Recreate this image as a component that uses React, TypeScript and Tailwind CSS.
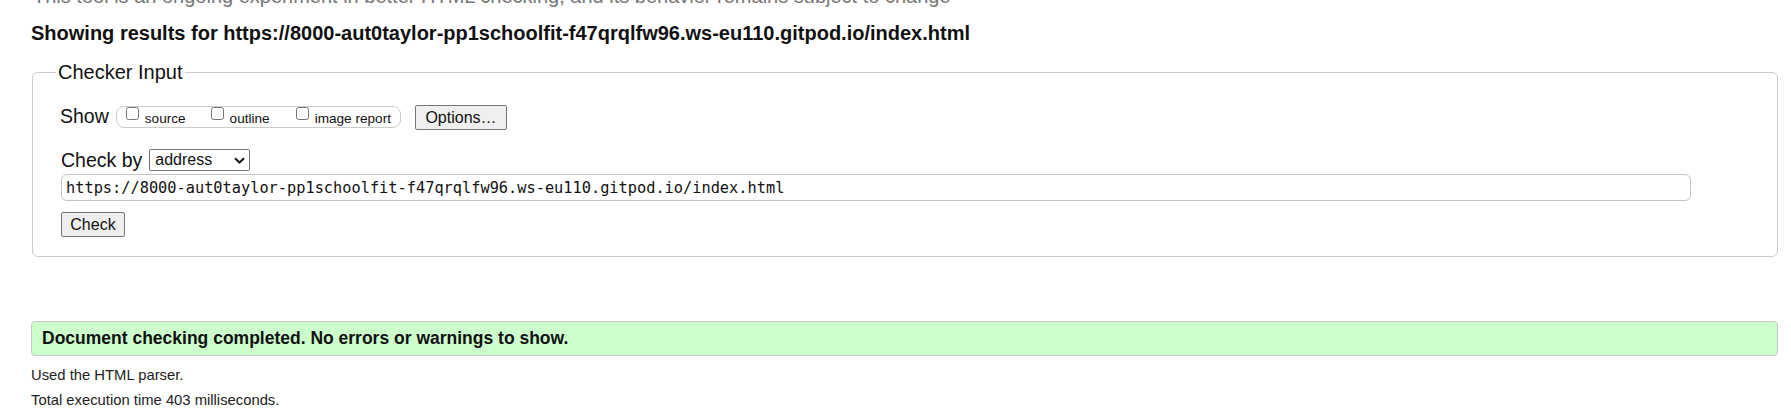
export default function App() {
  return (
    <div className="min-h-[411px] overflow-hidden bg-white font-['Liberation_Sans',Arial,sans-serif] text-black">
      <div className="ml-[31px] w-[1747px]">
        <p className="-mt-[15px] ml-[2px] whitespace-nowrap text-[20px] leading-[23px] text-[#777]">
          This tool is an ongoing experiment in better HTML checking, and its behavior remains subject to change
        </p>
        <h2 className="mt-[14px] whitespace-nowrap text-[20px] font-bold leading-[23px] text-[#111]">
          Showing results for https://8000-aut0taylor-pp1schoolfit-f47qrqlfw96.ws-eu110.gitpod.io/index.html
        </h2>

        <fieldset className="mt-[16px] ml-[1px] rounded-[6px] border border-[#cccccc] pl-[28px] pt-[21px] pb-[19px]">
          <legend className="-ml-[5px] px-[2px] text-[20px] leading-[23px] text-[#111]">Checker Input</legend>

          <div className="flex items-start">
            <span className="-ml-[1px] text-[19.5px] leading-[23px] text-[#111]">Show</span>
            <div className="ml-[7px] mt-[1px] flex h-[22px] items-start rounded-[8px] border border-[#cccccc] pr-[9px]">
              <input type="checkbox" className="m-0 ml-[9px] h-[13px] w-[13px]" />
              <span className="ml-[6px] mt-[4px] text-[13.6px] leading-[16px] text-[#111]">source</span>
              <input type="checkbox" className="m-0 ml-[25px] h-[13px] w-[13px]" />
              <span className="ml-[6px] mt-[4px] text-[13.6px] leading-[16px] text-[#111]">outline</span>
              <input type="checkbox" className="m-0 ml-[26px] h-[13px] w-[13px]" />
              <span className="ml-[6px] mt-[4px] text-[13.6px] leading-[16px] text-[#111]">image report</span>
            </div>
            <button
              type="button"
              className="ml-[14px] flex h-[25px] w-[92px] items-center justify-center rounded-[2px] border border-[#767676] bg-[#efefef] text-[16px] leading-[18px] text-[#111]"
            >
              Options…
            </button>
          </div>

          <div className="mt-[19px] flex items-start">
            <span className="text-[19.5px] leading-[23px] text-[#111]">Check by</span>
            <div className="ml-[7px] flex h-[22px] w-[101px] items-center rounded-[2px] border border-[#767676] pl-[5px] text-[16px] leading-[20px] text-[#111]">
              <span>address</span>
              <svg className="ml-auto mr-[4px]" width="11" height="7" viewBox="0 0 11 7">
                <path d="M1 1.2l4.5 4.3L10 1.2" stroke="#111" strokeWidth="2" fill="none" />
              </svg>
            </div>
          </div>

          <input
            readOnly
            value="https://8000-aut0taylor-pp1schoolfit-f47qrqlfw96.ws-eu110.gitpod.io/index.html"
            className="mt-[2px] block h-[27px] w-[1630px] rounded-[6px] border border-[#c5c5c5] pl-[4px] font-['DejaVu_Sans_Mono',monospace] text-[15.3px] text-[#111] outline-none"
          />

          <button
            type="button"
            className="mt-[11px] flex h-[25px] w-[64px] items-center justify-center rounded-[2px] border border-[#767676] bg-[#efefef] text-[16px] leading-[18px] text-[#111]"
          >
            Check
          </button>
        </fieldset>

        <div className="mt-[64px] h-[35px] rounded-[4px] border border-[#c8c8c8] bg-[#ccffcc] pl-[10px] text-[17.5px] font-bold leading-[33px] text-[#111]">
          Document checking completed. No errors or warnings to show.
        </div>

        <p className="mt-[6.5px] text-[14.8px] leading-[25px] text-[#222]">Used the HTML parser.</p>
        <p className="text-[14.8px] leading-[25px] text-[#222]">Total execution time 403 milliseconds.</p>
      </div>
    </div>
  );
}
